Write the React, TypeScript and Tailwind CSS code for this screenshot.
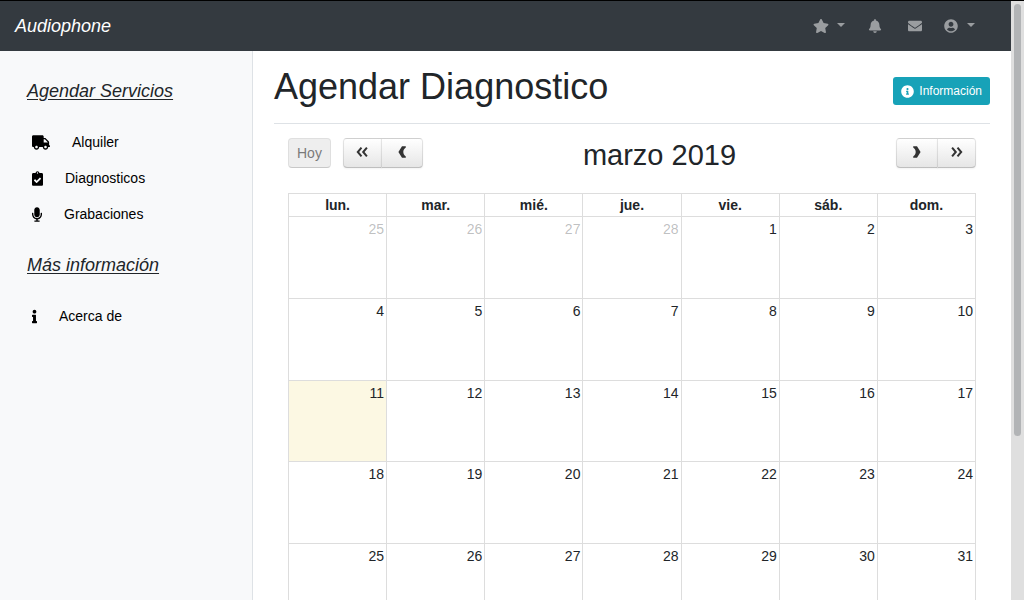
import type { ReactNode } from 'react';
import {
  FaBell,
  FaClipboardCheck,
  FaEnvelope,
  FaInfo,
  FaInfoCircle,
  FaMicrophone,
  FaStar,
  FaTruck,
  FaUserCircle,
} from 'react-icons/fa';

const WEEKDAYS = ['lun.', 'mar.', 'mié.', 'jue.', 'vie.', 'sáb.', 'dom.'];

const LEADING_DAYS = 4;
const TODAY = 11;

const days = Array.from({ length: 35 }, (_, i) =>
  i < LEADING_DAYS ? { day: 25 + i, other: true } : { day: i - LEADING_DAYS + 1, other: false },
);

const weeks = Array.from({ length: 5 }, (_, w) => days.slice(w * 7, w * 7 + 7));

function Caret() {
  return (
    <svg viewBox="0 0 8 4" className="w-2 h-1 mb-0.5" fill="currentColor" aria-hidden="true">
      <path d="M0 0h8L4 4z" />
    </svg>
  );
}

function DoubleArrow({ flip = false }: { flip?: boolean }) {
  return (
    <svg
      viewBox="0 0 12 12"
      className={`size-3 mb-0.5 ${flip ? '-scale-x-100' : ''}`}
      fill="none"
      stroke="currentColor"
      strokeWidth="2"
      aria-hidden="true"
    >
      <path d="M5.500 1.600 1.800 6l3.700 4.400M10.900 1.600 7.200 6l3.700 4.400" />
    </svg>
  );
}

function SingleArrow({ flip = false }: { flip?: boolean }) {
  return (
    <svg
      viewBox="0 0 8 12"
      className={`h-3 w-2 mb-0.5 ${flip ? '-scale-x-100' : ''}`}
      fill="currentColor"
      aria-hidden="true"
    >
      <path d="M4 .3h3.800v1.200C6.200 2.700 5.300 4.300 5.300 6s.9 3.300 2.500 4.500v1.200H4L.4 6z" />
    </svg>
  );
}

function SideHeading({ children }: { children: ReactNode }) {
  return <h2 className="px-[27px] text-lg leading-6 italic underline underline-offset-2">{children}</h2>;
}

function SideLink({ icon, children }: { icon: ReactNode; children: ReactNode }) {
  return (
    <a href="#" className="flex items-center h-9 pl-8 gap-[22px] text-sm text-black">
      {icon}
      <span>{children}</span>
    </a>
  );
}

const calButton =
  'flex items-center justify-center h-[30px] border border-black/10 border-b-black/25 bg-linear-to-b from-white to-[#e6e6e6] text-[#333] shadow-[inset_0_1px_0_rgba(255,255,255,0.2),0_1px_2px_rgba(0,0,0,0.05)]';

export default function App() {
  return (
    <div className="flex h-screen overflow-hidden border-t border-black bg-white font-['Liberation_Sans',Arial,sans-serif] text-[#212529]">
      <div className="flex flex-col flex-1 min-w-0">
        <nav className="flex shrink-0 items-center justify-between h-[50px] pl-[15px] pr-9 bg-[#343a40]">
          <a href="#" className="text-lg italic text-white">
            Audiophone
          </a>
          <div className="flex items-center text-[14px] text-white/50">
            <button type="button" aria-label="Favoritos" className="flex items-center gap-2">
              <FaStar className="size-4" />
              <Caret />
            </button>
            <button type="button" aria-label="Notificaciones" className="ml-[23px]">
              <FaBell />
            </button>
            <button type="button" aria-label="Mensajes" className="ml-[26px]">
              <FaEnvelope />
            </button>
            <button type="button" aria-label="Cuenta" className="flex items-center gap-[9px] ml-[22px]">
              <FaUserCircle />
              <Caret />
            </button>
          </div>
        </nav>

        <div className="flex flex-1 min-h-0">
          <aside className="w-[253px] shrink-0 border-r border-[#dee2e6] bg-[#f8f9fa] pt-7">
            <SideHeading>Agendar Servicios</SideHeading>
            <div className="my-[21px]">
              <SideLink icon={<FaTruck className="h-[15px] w-[18px]" />}>Alquiler</SideLink>
              <SideLink icon={<FaClipboardCheck className="h-[15px] w-[11px]" />}>Diagnosticos</SideLink>
              <SideLink icon={<FaMicrophone className="h-[15px] w-[10px]" />}>Grabaciones</SideLink>
            </div>
            <SideHeading>Más información</SideHeading>
            <div className="my-[21px]">
              <SideLink icon={<FaInfo className="h-[15px] w-[5px]" />}>Acerca de</SideLink>
            </div>
          </aside>

          <main className="flex-1 min-w-0 overflow-hidden px-[21px]">
            <header className="flex items-center justify-between h-[73px] border-b border-[#dee2e6]">
              <h1 className="text-4xl">Agendar Diagnostico</h1>
              <button
                type="button"
                className="flex items-center gap-[5px] h-7 px-2 mt-2 rounded-[3px] bg-[#17a2b8] text-xs text-white"
              >
                <FaInfoCircle className="size-[13px]" />
                Información
              </button>
            </header>

            <section className="px-[14px] pt-[14px]">
              <div className="flex items-start justify-between">
                <div className="flex gap-3">
                  <button
                    type="button"
                    disabled
                    className="h-[30px] px-2 rounded border border-black/10 border-b-black/25 bg-[#e6e6e6] text-sm text-[#333] opacity-65"
                  >
                    Hoy
                  </button>
                  <div className="flex">
                    <button type="button" aria-label="Año anterior" className={`${calButton} w-[39px] rounded-l`}>
                      <DoubleArrow />
                    </button>
                    <button type="button" aria-label="Mes anterior" className={`${calButton} w-[42px] -ml-px rounded-r`}>
                      <SingleArrow />
                    </button>
                  </div>
                </div>
                <h2 className="text-[29px] leading-[34px]">marzo 2019</h2>
                <div className="flex">
                  <button type="button" aria-label="Mes siguiente" className={`${calButton} w-[42px] rounded-l`}>
                    <SingleArrow flip />
                  </button>
                  <button type="button" aria-label="Año siguiente" className={`${calButton} w-[39px] -ml-px rounded-r`}>
                    <DoubleArrow flip />
                  </button>
                </div>
              </div>

              <table className="mt-[21px] h-[433px] w-full table-fixed border-collapse text-sm">
                <thead>
                  <tr className="h-[23px]">
                    {WEEKDAYS.map((d) => (
                      <th key={d} className="border border-[#ddd] p-0 font-bold">
                        {d}
                      </th>
                    ))}
                  </tr>
                </thead>
                <tbody>
                  {weeks.map((week, w) => (
                    <tr key={w}>
                      {week.map(({ day, other }) => (
                        <td
                          key={day}
                          className={`border border-[#ddd] p-0.5 text-right align-top ${
                            !other && day === TODAY ? 'bg-[#fcf8e3]' : ''
                          } ${other ? 'text-[#212529]/30' : ''}`}
                        >
                          {day}
                        </td>
                      ))}
                    </tr>
                  ))}
                </tbody>
              </table>
            </section>
          </main>
        </div>
      </div>

      <div className="w-[13px] shrink-0 bg-[#dfdfdf] px-[3px] pt-[3px]" aria-hidden="true">
        <div className="h-[72.5%] rounded-full bg-[#b2b4b6]" />
      </div>
    </div>
  );
}
